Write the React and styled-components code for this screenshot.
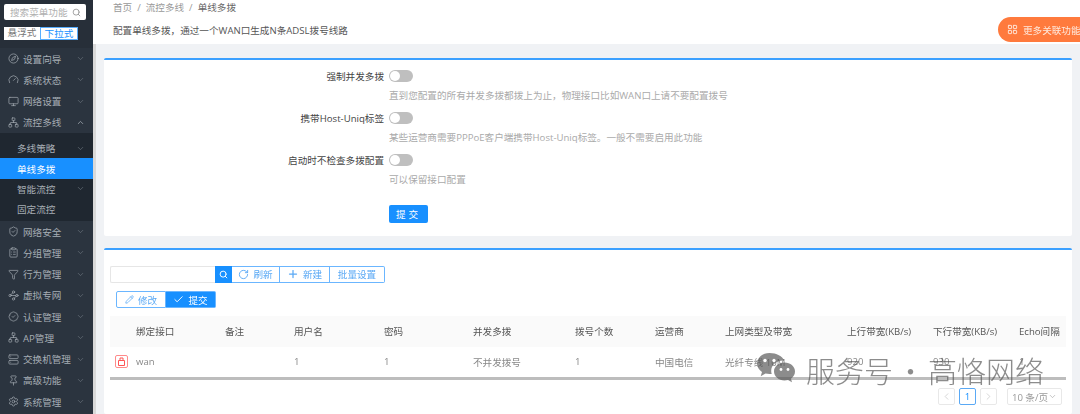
import React from 'react';
import styled, { createGlobalStyle } from 'styled-components';
import {
  Search, Compass, Gauge, Monitor, Network, ShieldCheck, ClipboardList, Filter, Waypoints,
  BadgeCheck, Server, Pin, Settings, ChevronDown, ChevronUp, ChevronLeft, ChevronRight,
  RotateCw, Plus, Pencil, Check, LayoutGrid,
} from 'lucide-react';

const Global = createGlobalStyle`
  html, body { margin: 0; padding: 0; background: #f0f2f5; }
  body { font-family: "Open Sans", "Noto Sans CJK SC", sans-serif; font-size: 9.6px; color: #555; }
  * { box-sizing: border-box; }
`;

const Page = styled.div`
  width: 1080px; height: 414px; display: flex; overflow: hidden; position: relative; filter: blur(0.35px);
`;
const Sidebar = styled.aside`
  width: 93px; flex: none; background: #2b343f; display: flex; flex-direction: column; height: 414px; overflow: hidden;
`;
const SideTop = styled.div`
  background: #272f39; padding: 4px 7px 0 4px; height: 48px; flex: none;
`;
const SearchBox = styled.div`
  height: 16px; width: 82px; background: #fff; border-radius: 2px; display: flex; align-items: center;
  justify-content: space-between; padding: 0 5px 0 6px; color: #b0b0b0; font-size: 9.6px; white-space: nowrap;
  svg { flex: none; color: #888; }
`;
const ModeRow = styled.div`
  display: flex; margin-top: 7px; width: 74px; height: 13px; background: #fff;
`;
const Mode = styled.div`
  flex: 1; font-size: 9.6px; line-height: 12px; text-align: center; white-space: nowrap;
  color: ${p => (p.$on ? '#1890ff' : '#777')};
  border: ${p => (p.$on ? '1px solid #58aeff' : 'none')};
`;
const MenuList = styled.nav`
  display: flex; flex-direction: column;
`;
const MenuItem = styled.div`
  height: 21.25px; flex: none; display: flex; align-items: center; padding: 0 8px 0 8px; color: #a6adb4; font-size: 9.6px; white-space: nowrap;
  span { margin-left: 4px; flex: 1; }
  svg { flex: none; }
`;
const SubMenu = styled.div`
  background: #1f2730; padding-top: 5px; height: 88px; flex: none; display: flex; flex-direction: column;
`;
const SubItem = styled.div`
  height: 20.4px; flex: none; display: flex; align-items: center; padding: 0 8px 0 17px; font-size: 9.6px; white-space: nowrap;
  color: ${p => (p.$on ? '#fff' : '#a6adb4')};
  background: ${p => (p.$on ? '#1890ff' : 'transparent')};
  span { flex: 1; }
`;
const Gutter = styled.div`
  width: 3px; flex: none; margin-top: 40px; background: #d9d9d9;
`;
const Main = styled.main`
  flex: 1; min-width: 0; display: flex; flex-direction: column; position: relative;
`;
const Header = styled.header`
  height: 44px; flex: none; background: #fff; padding: 1px 0 0 20px; position: relative; margin-left: -3px;
`;
const Crumbs = styled.div`
  display: flex; gap: 5px; color: #999; font-size: 9.6px; line-height: 14px;
  b { font-weight: 400; color: #666; }
`;
const Desc = styled.div`
  margin-top: 9px; color: #555; font-size: 9.6px; line-height: 14px;
`;
const OrangeTab = styled.div`
  position: absolute; right: 0; top: 17px; width: 82px; height: 25px; background: #ff7a3d; border-radius: 13px 0 0 13px;
  color: #ffe9dd; display: flex; align-items: center; padding-left: 9px; gap: 5px; font-size: 9.6px; white-space: nowrap;
  svg { flex: none; }
`;
const Body = styled.div`
  flex: 1; min-height: 0; padding: 14px 8px 0 8px; display: flex; flex-direction: column; gap: 12px;
`;
const Card = styled.section`
  background: #fff; border-top: 2px solid #3ba0ff; border-radius: 2px;
`;
const FormCard = styled(Card)`
  height: 178px; padding-top: 8px; flex: none;
`;
const FormRow = styled.div`
  display: flex; align-items: center; height: 16px; margin-bottom: 26px;
  &:nth-child(3) { margin-bottom: 37px; }
`;
const RowLabel = styled.label`
  width: 280px; text-align: right; color: #444; font-size: 9.6px; flex: none;
`;
const Field = styled.div`
  margin-left: 5px; position: relative; display: flex; align-items: center;
`;
const Toggle = styled.span`
  width: 24px; height: 12px; border-radius: 6px; background: #bfbfbf; position: relative; display: block;
  &::after { content: ''; position: absolute; left: 1px; top: 1px; width: 10px; height: 10px; border-radius: 50%; background: #fff; }
`;
const Hint = styled.div`
  position: absolute; left: 0; top: 18px; white-space: nowrap; color: #aaa; font-size: 9.6px; line-height: 16px;
`;
const Submit = styled.button`
  margin-left: 285px; width: 39px; height: 18px; border: none; border-radius: 2px; background: #1890ff; color: #fff;
  font: inherit; font-size: 9.6px; padding: 0; letter-spacing: 3px; display: block;
`;
const ListCard = styled(Card)`
  flex: 1; padding: 15.5px 6px 0 6px; min-height: 0; position: relative;
`;
const Tools = styled.div`
  display: flex; height: 17px; margin-bottom: 8.5px;
`;
const SearchInput = styled.div`
  width: 105px; border: 1px solid #e6e6e6; border-right: none; border-radius: 2px 0 0 2px; background: #fff;
`;
const SearchBtn = styled.div`
  width: 17px; background: #1890ff; color: #fff; display: flex; align-items: center; justify-content: center;
`;
const Tool = styled.div`
  height: 17px; border: 1px solid #6bb6ff; border-left: ${p => (p.$first ? '1px solid #6bb6ff' : 'none')};
  color: ${p => (p.$active ? '#fff' : '#5aa9f5')}; background: ${p => (p.$active ? '#1890ff' : '#fff')};
  display: flex; align-items: center; justify-content: center; gap: 4px; width: ${p => p.$w}px; font-size: 9.6px; white-space: nowrap;
  &:last-child { border-radius: 0 2px 2px 0; }
  &:first-child { border-radius: 2px 0 0 2px; }
`;
const Actions = styled.div`
  display: flex; height: 17px; margin: 0 0 8px 6px;
`;
const Table = styled.div`
  width: 956px;
`;
const cols = '26px 89px 69px 90px 89px 102px 80px 70px 122px 86px 86px 47px';
const Head = styled.div`
  display: grid; grid-template-columns: ${cols}; height: 30.5px; align-items: center; background: #fafafa; color: #555; font-size: 9.6px; white-space: nowrap;
`;
const Row = styled.div`
  display: grid; grid-template-columns: ${cols}; height: 30.5px; align-items: center; color: #888; font-size: 9.6px; white-space: nowrap;
  border-bottom: 3px solid #bdbdbd; box-sizing: content-box;
`;
const PortIcon = styled.div`
  margin-left: 5px; width: 13px; height: 13px; border: 1px solid #ff8a8a; border-radius: 2px; color: #f55; display: flex; align-items: center; justify-content: center;
`;
const Pager = styled.div`
  display: flex; justify-content: flex-end; align-items: center; gap: 4px; margin-top: 8px; padding-right: 4px; color: #aaa;
`;
const PageBtn = styled.div`
  width: 17px; height: 17px; border: 1px solid ${p => (p.$on ? '#5aa9f5' : '#e8e8e8')}; border-radius: 2px; display: flex; align-items: center; justify-content: center;
  color: ${p => (p.$on ? '#1890ff' : '#c4c4c4')}; font-size: 9.6px;
`;
const PageSize = styled.div`
  margin-left: 6px; width: 55px; height: 17px; border: 1px solid #e8e8e8; border-radius: 2px; display: flex; align-items: center; justify-content: center; font-size: 9.6px; color: #999; white-space: nowrap;
`;
const Watermark = styled.div`
  position: absolute; left: 757px; top: 353px; display: flex; align-items: flex-start; gap: 9px; color: rgba(85,85,85,.68); font-size: 29px; line-height: 35px; white-space: nowrap; pointer-events: none;
  font-family: "Noto Sans CJK SC", sans-serif; font-weight: 300;
`;
const WaterDot = styled.span`
  margin: 0 3px;
`;

const top = [
  [Compass, '设置向导'], [Gauge, '系统状态'], [Monitor, '网络设置'],
];
const rest = [
  [ShieldCheck, '网络安全'], [ClipboardList, '分组管理'], [Filter, '行为管理'], [Waypoints, '虚拟专网'],
  [BadgeCheck, '认证管理'], [Network, 'AP管理'], [Server, '交换机管理'], [Pin, '高级功能'], [Settings, '系统管理'],
];
const Item = ({ icon: I, label, up }) => (
  <MenuItem>
    <I size={11} strokeWidth={1.5} />
    <span>{label}</span>
    {up ? <ChevronUp size={9} /> : <ChevronDown size={9} strokeWidth={1.5} color="#77808a" />}
  </MenuItem>
);
const headers = ['', '绑定接口', '备注', '用户名', '密码', '并发多拨', '拨号个数', '运营商', '上网类型及带宽', '上行带宽(KB/s)', '下行带宽(KB/s)', 'Echo间隔'];
const forms = [
  ['强制并发多拨', '直到您配置的所有并发多拨都拨上为止，物理接口比如WAN口上请不要配置拨号'],
  ['携带Host-Uniq标签', '某些运营商需要PPPoE客户端携带Host-Uniq标签。一般不需要启用此功能'],
  ['启动时不检查多拨配置', '可以保留接口配置'],
];

const WeChat = () => (
  <svg width="40" height="33" viewBox="0 0 40 33" fill="currentColor">
    <path d="M12.5 0C5.600 0 0 4.700 0 10.500c0 3.500 2 6.500 5 8.500l-1.300 4.200 4.800-2.600c1.300.3 2.600.5 4 .5h2.200c-.3-1-.5-2-.5-3.100 0-5.800 5.300-10.400 12-10.400h.9C25.600 3.300 19.600 0 12.500 0z" />
    <path d="M38 18.500c0-4.900-4.700-8.900-10.500-8.900S17 13.600 17 18.500s4.700 9 10.500 9c1.200 0 2.400-.2 3.500-.5l4 2.300-1-3.500c2.400-1.800 4-4.300 4-7.300z" />
    <circle cx="8" cy="7.500" r="1.700" fill="#fff" />
    <circle cx="17" cy="7.500" r="1.700" fill="#fff" />
    <circle cx="24" cy="16.500" r="1.400" fill="#fff" />
    <circle cx="31" cy="16.500" r="1.400" fill="#fff" />
  </svg>
);

export default function App() {
  return (
    <Page>
      <Global />
      <Sidebar>
        <SideTop>
          <SearchBox>搜索菜单功能<Search size={9} /></SearchBox>
          <ModeRow><Mode>悬浮式</Mode><Mode $on>下拉式</Mode></ModeRow>
        </SideTop>
        <MenuList>
          {top.map(([i, l]) => <Item key={l} icon={i} label={l} />)}
          <Item icon={Network} label="流控多线" up />
          <SubMenu>
            <SubItem><span>多线策略</span><ChevronDown size={9} strokeWidth={1.5} color="#77808a" /></SubItem>
            <SubItem $on><span>单线多拨</span></SubItem>
            <SubItem><span>智能流控</span><ChevronDown size={9} strokeWidth={1.5} color="#77808a" /></SubItem>
            <SubItem><span>固定流控</span></SubItem>
          </SubMenu>
          {rest.map(([i, l]) => <Item key={l} icon={i} label={l} />)}
        </MenuList>
      </Sidebar>
      <Gutter />
      <Main>
        <Header>
          <Crumbs><span>首页</span><span>/</span><span>流控多线</span><span>/</span><b>单线多拨</b></Crumbs>
          <Desc>配置单线多拨，通过一个WAN口生成N条ADSL拨号线路</Desc>
          <OrangeTab><LayoutGrid size={11} />更多关联功能</OrangeTab>
        </Header>
        <Body>
          <FormCard>
            {forms.map(([l, h]) => (
              <FormRow key={l}>
                <RowLabel>{l}</RowLabel>
                <Field><Toggle /><Hint>{h}</Hint></Field>
              </FormRow>
            ))}
            <Submit>提交</Submit>
          </FormCard>
          <ListCard>
            <Tools>
              <SearchInput />
              <SearchBtn><Search size={9} strokeWidth={2.5} /></SearchBtn>
              <Tool $w={48}><RotateCw size={11} />刷新</Tool>
              <Tool $w={50}><Plus size={12} strokeWidth={2.5} />新建</Tool>
              <Tool $w={55}>批量设置</Tool>
            </Tools>
            <Actions>
              <Tool $first $w={50}><Pencil size={9} />修改</Tool>
              <Tool $active $w={50}><Check size={11} />提交</Tool>
            </Actions>
            <Table>
              <Head>{headers.map((h, i) => <div key={i}>{h}</div>)}</Head>
              <Row>
                <PortIcon><svg width="9" height="9" viewBox="0 0 9 9" fill="none" stroke="currentColor"><path d="M1.5 3.500h6V8.500h-6zM3 3.500V1h3v2.500" /></svg></PortIcon>
                <div>wan</div><div></div><div>1</div><div>1</div><div>不并发拨号</div><div>1</div><div>中国电信</div><div>光纤专线 10M</div><div>920</div><div>930</div><div>1</div>
              </Row>
            </Table>
            <Pager>
              <PageBtn><ChevronLeft size={11} strokeWidth={1.5} /></PageBtn>
              <PageBtn $on>1</PageBtn>
              <PageBtn><ChevronRight size={11} strokeWidth={1.5} /></PageBtn>
              <PageSize>10 条/页<ChevronDown size={9} strokeWidth={1.5} /></PageSize>
            </Pager>
          </ListCard>
        </Body>
      </Main>
      <Watermark><WeChat /><span>服务号<WaterDot>·</WaterDot>高恪网络</span></Watermark>
    </Page>
  );
}
